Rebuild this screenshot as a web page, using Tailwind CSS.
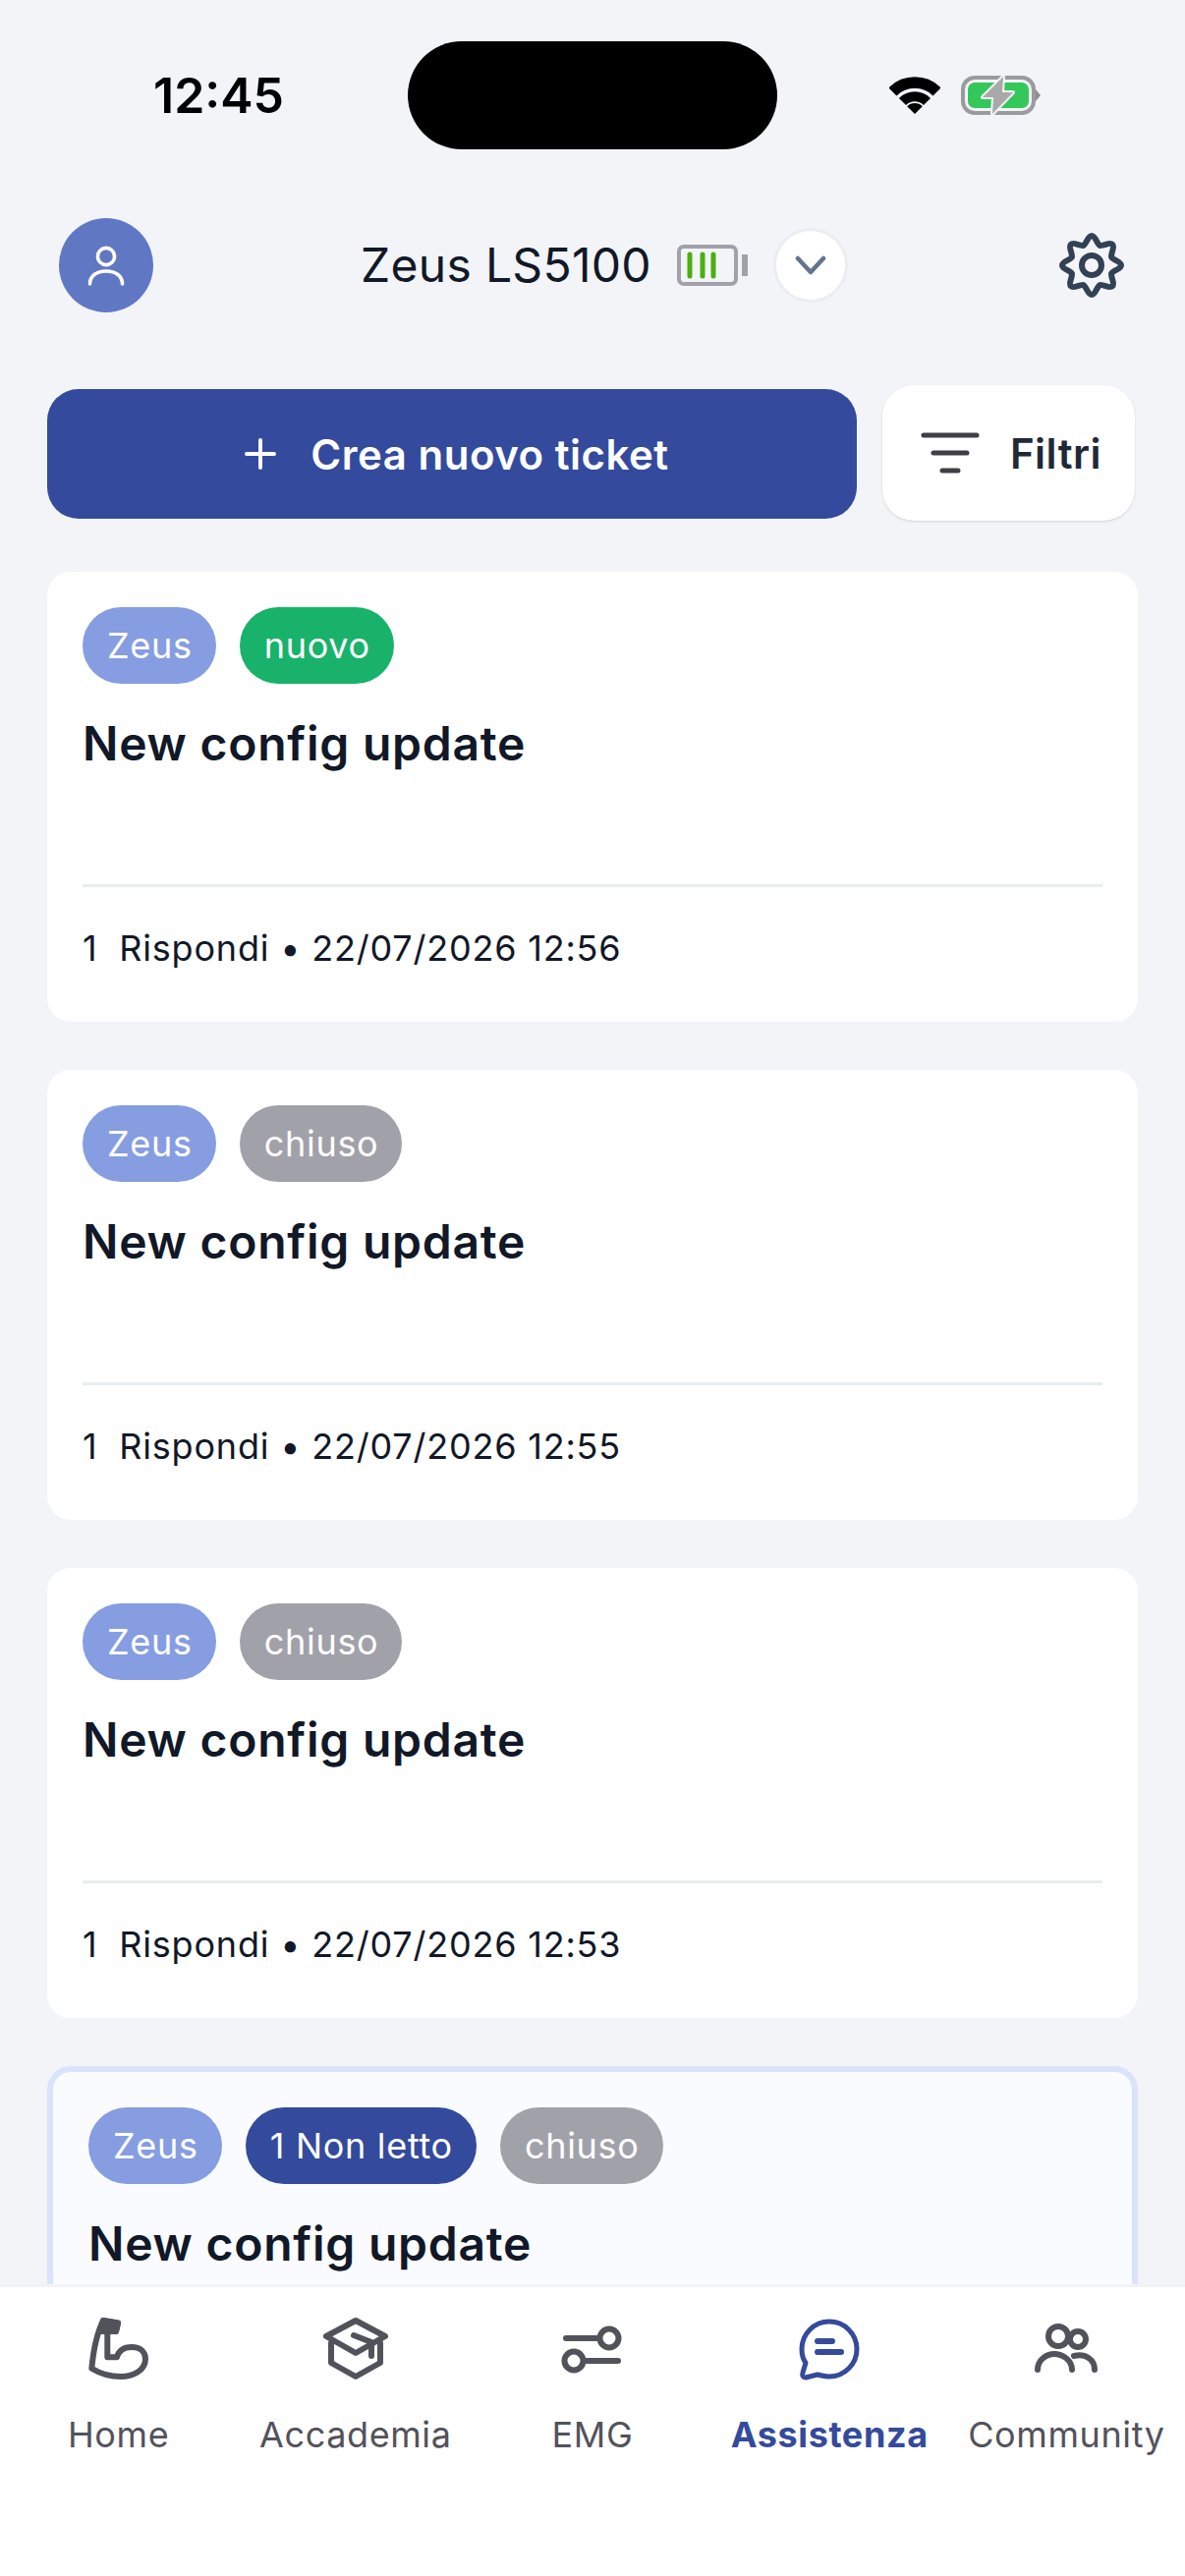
<!DOCTYPE html>
<html lang="it">
<head>
  <meta charset="UTF-8" />
  <meta name="viewport" content="width=device-width, initial-scale=1.0"/>
  <title>Assistenza</title>
  <script src="https://cdn.jsdelivr.net/npm/@tailwindcss/browser@4"></script>
</head>
<body class="bg-[#f2f4f8] font-['Inter',sans-serif] text-[#111827]">
<div class="relative h-[2622px] w-[1206px] overflow-hidden">

  <!-- STATUS BAR -->
  <div class="flex h-[152px] items-start pt-[42px]">
    <div class="flex h-[110px] w-[415px] items-center justify-center pt-[1px] pl-[30px] text-[50px] font-semibold text-black">12:45</div>
    <div class="h-[110px] w-[376px] rounded-[55px] bg-black"></div>
    <div class="flex h-[110px] items-center pl-[114px]">
      <svg width="52" height="38" viewBox="0 0 52 38" fill="none">
        <path d="M3.4 15.4A32 32 0 0 1 48.6 15.4" stroke="#000" stroke-width="11.5"/>
        <path d="M13.5 25.5A17.7 17.7 0 0 1 38.5 25.5" stroke="#000" stroke-width="10"/>
        <path d="M26 38L18.2 30.2A11 11 0 0 1 33.8 30.2Z" fill="#000"/>
      </svg>
      <svg class="ml-[21px]" width="84" height="41" viewBox="0 0 84 41" fill="none">
        <rect x="2" y="2" width="72" height="36" rx="12" stroke="#9b9b9b" stroke-width="4"/>
        <rect x="7" y="7" width="62" height="26" rx="7" fill="#34c759"/>
        <path d="M76 14L81 20L76 26Z" fill="#8e8e8e"/>
        <path d="M43 1L22 22H33L32 39L53 17H42Z" fill="#a9a9a9" stroke="#f2f4f8" stroke-width="4" stroke-linejoin="round" paint-order="stroke"/>
      </svg>
    </div>
  </div>

  <!-- HEADER -->
  <header class="mt-[70px] flex h-[96px] items-center pl-[60px]">
    <div class="flex size-[96px] items-center justify-center rounded-full bg-[#6078c4]">
      <svg width="40" height="46" viewBox="0 0 40 46" fill="none" stroke="#fff" stroke-width="3.6" stroke-linecap="round">
        <circle cx="20" cy="14" r="8.6"/>
        <path d="M3.5 42C3.5 34 10 29 20 29S36.5 34 36.5 42"/>
      </svg>
    </div>
    <div class="ml-[211px] text-[48px] leading-none tracking-[0.3px] text-[#111827]">Zeus LS5100</div>
    <svg class="ml-[26px]" width="72" height="42" viewBox="0 0 72 42" fill="none">
      <rect x="2" y="2" width="58" height="38" rx="5" stroke="#a1a1aa" stroke-width="4"/>
      <path d="M66 10H72V32H66Z" fill="#a1a1aa"/>
      <path d="M13 10V32M26 10V32M37 10V32" stroke="#4caf0e" stroke-width="5" stroke-linecap="round"/>
    </svg>
    <button class="ml-[26px] flex size-[76px] items-center justify-center rounded-full border-[3px] border-[#ebedf2] bg-white">
      <svg width="32" height="20" viewBox="0 0 32 20" fill="none" stroke="#64748b" stroke-width="4.5" stroke-linecap="round" stroke-linejoin="round"><path d="M3 3L16 17L29 3"/></svg>
    </button>
    <svg class="ml-[214px]" width="68" height="68" viewBox="-34 -34 68 68" fill="none" stroke="#334155" stroke-width="6" stroke-linecap="round">
      <path d="M-8.42 -20.3C-5.2 -21.6 -4 -30 0 -30S5.2 -21.6 8.42 -20.3"/>
      <path transform="rotate(45)" d="M-8.42 -20.3C-5.2 -21.6 -4 -30 0 -30S5.2 -21.6 8.42 -20.3"/>
      <path transform="rotate(90)" d="M-8.42 -20.3C-5.2 -21.6 -4 -30 0 -30S5.2 -21.6 8.42 -20.3"/>
      <path transform="rotate(135)" d="M-8.42 -20.3C-5.2 -21.6 -4 -30 0 -30S5.2 -21.6 8.42 -20.3"/>
      <path transform="rotate(180)" d="M-8.42 -20.3C-5.2 -21.6 -4 -30 0 -30S5.2 -21.6 8.42 -20.3"/>
      <path transform="rotate(225)" d="M-8.42 -20.3C-5.2 -21.6 -4 -30 0 -30S5.2 -21.6 8.42 -20.3"/>
      <path transform="rotate(270)" d="M-8.42 -20.3C-5.2 -21.6 -4 -30 0 -30S5.2 -21.6 8.42 -20.3"/>
      <path transform="rotate(315)" d="M-8.42 -20.3C-5.2 -21.6 -4 -30 0 -30S5.2 -21.6 8.42 -20.3"/>
      <circle r="10"/>
    </svg>
  </header>

  <!-- ACTIONS -->
  <div class="mt-[74px] flex h-[138px] items-start pl-[48px]">
    <button class="mt-[4px] flex h-[132px] w-[824px] items-center justify-center gap-[35px] rounded-[32px] bg-[#344a9c] pl-[10px] text-[42px] font-semibold tracking-[0.5px] text-white">
      <svg width="32" height="32" viewBox="0 0 32 32" fill="none" stroke="#fff" stroke-width="4" stroke-linecap="round"><path d="M16 2V30M2 16H30"/></svg>
      Crea nuovo ticket
    </button>
    <button class="ml-[26px] flex h-[138px] w-[257px] items-center justify-center gap-[31px] rounded-[32px] bg-white pl-[5px] text-[42px] font-semibold tracking-[0.5px] text-[#1f2937] shadow-sm">
      <svg width="60" height="42" viewBox="0 0 60 42" fill="none" stroke="#3f3f46" stroke-width="5" stroke-linecap="round"><path d="M3 3H57M13 21H47M22 39H38"/></svg>
      Filtri
    </button>
  </div>

  <!-- TICKETS -->
  <main class="mt-[52px] flex flex-col gap-[49px] px-[48px]">
    <article class="h-[458px] rounded-[24px] bg-white p-[36px]">
      <div class="flex gap-[24px] text-[36px] leading-[78px] tracking-[0.7px] text-white">
        <span class="rounded-full bg-[#869de2] pr-[24px] pl-[25px]">Zeus</span>
        <span class="rounded-full bg-[#18b26b] pr-[24px] pl-[25px]">nuovo</span>
      </div>
      <h3 class="mt-[32px] text-[48px] leading-[58px] font-semibold tracking-[0.75px]">New config update</h3>
      <div class="mt-[114px] h-[3px] bg-[#e9ecf1]"></div>
      <p class="mt-[40px] text-[36px] leading-[44px] tracking-[0.8px]">1&nbsp; Rispondi • 22/07/2026 12:56</p>
    </article>
    <article class="h-[458px] rounded-[24px] bg-white p-[36px]">
      <div class="flex gap-[24px] text-[36px] leading-[78px] tracking-[0.7px] text-white">
        <span class="rounded-full bg-[#869de2] pr-[24px] pl-[25px]">Zeus</span>
        <span class="rounded-full bg-[#a1a1aa] pr-[24px] pl-[25px]">chiuso</span>
      </div>
      <h3 class="mt-[32px] text-[48px] leading-[58px] font-semibold tracking-[0.75px]">New config update</h3>
      <div class="mt-[114px] h-[3px] bg-[#e9ecf1]"></div>
      <p class="mt-[40px] text-[36px] leading-[44px] tracking-[0.8px]">1&nbsp; Rispondi • 22/07/2026 12:55</p>
    </article>
    <article class="h-[458px] rounded-[24px] bg-white p-[36px]">
      <div class="flex gap-[24px] text-[36px] leading-[78px] tracking-[0.7px] text-white">
        <span class="rounded-full bg-[#869de2] pr-[24px] pl-[25px]">Zeus</span>
        <span class="rounded-full bg-[#a1a1aa] pr-[24px] pl-[25px]">chiuso</span>
      </div>
      <h3 class="mt-[32px] text-[48px] leading-[58px] font-semibold tracking-[0.75px]">New config update</h3>
      <div class="mt-[114px] h-[3px] bg-[#e9ecf1]"></div>
      <p class="mt-[40px] text-[36px] leading-[44px] tracking-[0.8px]">1&nbsp; Rispondi • 22/07/2026 12:53</p>
    </article>
    <article class="h-[458px] rounded-[24px] border-[6px] border-[#d9e3fc] bg-[#fafbff] p-[36px]">
      <div class="flex gap-[24px] text-[36px] leading-[78px] tracking-[0.7px] text-white">
        <span class="rounded-full bg-[#869de2] pr-[24px] pl-[25px]">Zeus</span>
        <span class="rounded-full bg-[#344a9c] pr-[24px] pl-[25px]">1 Non letto</span>
        <span class="rounded-full bg-[#a1a1aa] pr-[24px] pl-[25px]">chiuso</span>
      </div>
      <h3 class="mt-[32px] text-[48px] leading-[58px] font-semibold tracking-[0.75px]">New config update</h3>
    </article>
  </main>

  <!-- BOTTOM NAV -->
  <nav class="absolute inset-x-0 bottom-0 grid h-[297px] grid-cols-5 border-t-[3px] border-[#f1f3f6] bg-white pt-[30px] text-center text-[36px] leading-[44px] tracking-[0.6px] text-[#52525b]">
    <a class="flex flex-col items-center">
      <svg width="68" height="66" viewBox="0 0 68 66" fill="none" stroke="#52525b" stroke-width="6" stroke-linejoin="round">
        <path d="M6.3 52.7C8 35 11 18 18 4L33 6.5L31 15H22.3V41.3H32C34 34 40 31 47 31C56 31 61 36 61 43C61 55 48 61 36 61C25 61 15 58 6.3 52.7Z"/>
        <path d="M18 4L33 6.5L31 15H16Z" fill="#52525b"/>
      </svg>
      <span class="mt-[32px]">Home</span>
    </a>
    <a class="flex flex-col items-center">
      <svg width="68" height="66" viewBox="0 0 68 66" fill="none" stroke="#52525b" stroke-width="6" stroke-linecap="round" stroke-linejoin="round">
        <path d="M34 4L4 20L34 37L64 20Z"/>
        <path d="M9 27V47L34 61L59 47V27"/>
        <path d="M32 19L50 26V40"/>
      </svg>
      <span class="mt-[32px]">Accademia</span>
    </a>
    <a class="flex flex-col items-center">
      <svg width="68" height="66" viewBox="0 0 68 66" fill="none" stroke="#52525b" stroke-width="6" stroke-linecap="round">
        <path d="M7 22H40M28 45H60"/>
        <circle cx="51" cy="22" r="9.5"/>
        <circle cx="15" cy="45" r="9.5"/>
      </svg>
      <span class="mt-[32px]">EMG</span>
    </a>
    <a class="flex flex-col items-center font-bold text-[#344a9c]">
      <svg width="68" height="66" viewBox="0 0 68 66" fill="none" stroke="#344a9c" stroke-width="5" stroke-linecap="round" stroke-linejoin="round">
        <path d="M34 5A28 28 0 1 1 34 61C30 61 26 60 22 59L10 62C7 62 6 60 7 57L10 47C7 43 6 38 6 33A28 28 0 0 1 34 5Z"/>
        <path d="M22 25H37M22 36H46" stroke-width="6"/>
      </svg>
      <span class="mt-[32px]">Assistenza</span>
    </a>
    <a class="flex flex-col items-center">
      <svg width="68" height="66" viewBox="0 0 68 66" fill="none" stroke="#52525b" stroke-width="6" stroke-linecap="round">
        <circle cx="26" cy="20" r="10"/>
        <circle cx="46" cy="23" r="8"/>
        <path d="M5 54C5 44 14 38 22 38S40 44 40 54"/>
        <path d="M42 40C54 37 63 44 63 54"/>
      </svg>
      <span class="mt-[32px]">Community</span>
    </a>
  </nav>
</div>
</body>
</html>
